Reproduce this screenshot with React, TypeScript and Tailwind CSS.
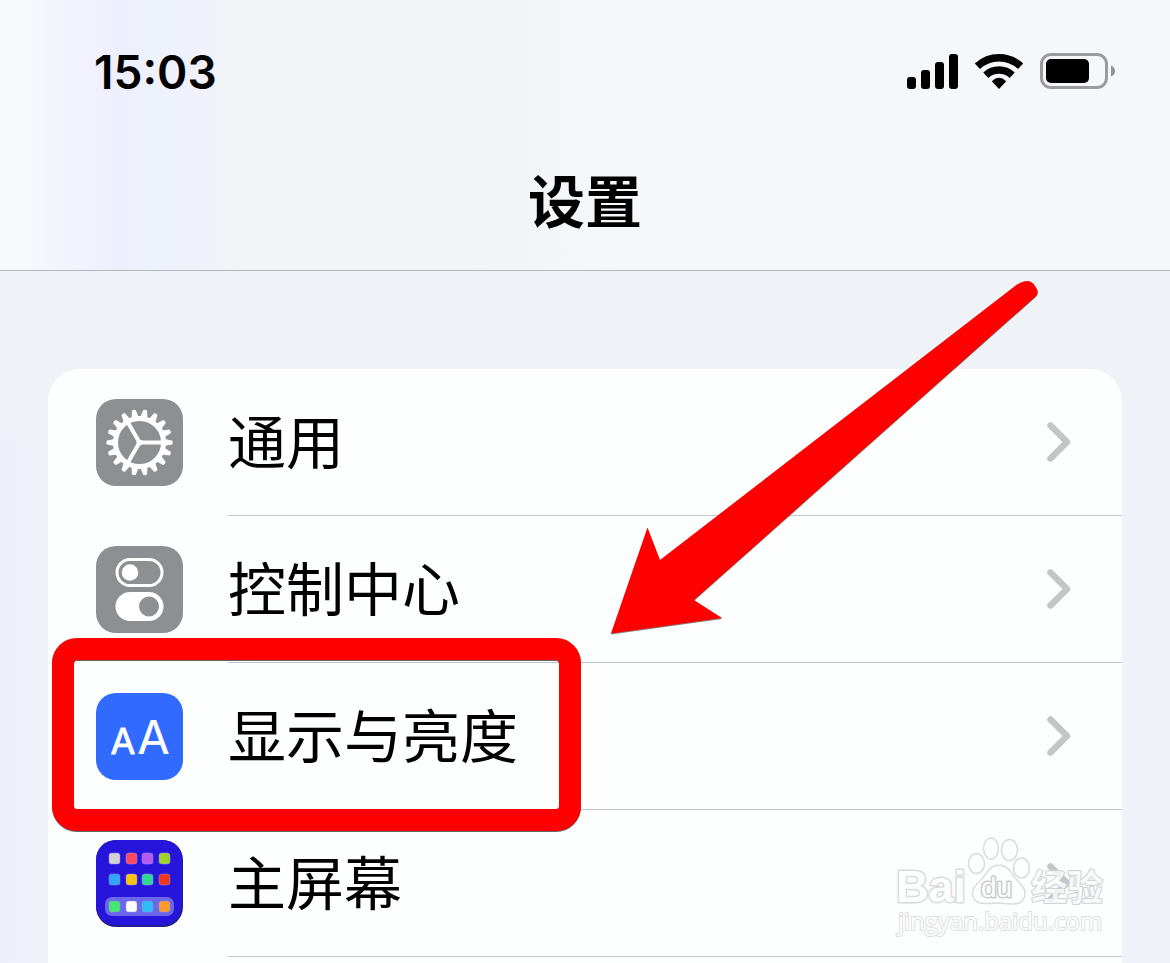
import React from "react";

function App() {
  return (
    <div className="min-h-screen flex flex-col bg-[linear-gradient(180deg,#eff2f6_340px,#eff2f600_460px),linear-gradient(90deg,#efeffa_0px,#eff1f8_60px,#eff2f6_240px)] text-black font-['Inter','Noto_Sans_CJK_SC',sans-serif]">
      <Header />
      <SettingsList />
    </div>
  );
}

export default App;

function Header() {
  return (
    <header className="border-b border-[#b4b6b9] bg-[linear-gradient(90deg,#f5f9fb_0px,#f5f9fb_30px,#f4f4fd_60px,#efeefc_120px,#edf2fc_150px,#f0f1fa_200px,#f0f4f6_240px,#f0f4f5_450px,#f5f8f9_620px,#f5f8f9_100%)]">
      <div className="h-36 flex items-center justify-between pl-[94px] pr-[55px]">
        <span className="text-[46px] font-semibold">15:03</span>
        <div className="flex items-center gap-[17px] pb-0.5">
          <SignalIcon />
          <WifiIcon />
          <BatteryIcon />
        </div>
      </div>
      <h1 className="h-[126px] pt-4 text-center text-[57px] leading-[86px] font-bold">
        设置
      </h1>
    </header>
  );
}

const settings = [
  { title: "通用", href: "#general", icon: <GearIcon />, highlighted: false },
  {
    title: "控制中心",
    href: "#control-center",
    icon: <ControlCenterIcon />,
    highlighted: false,
  },
  {
    title: "显示与亮度",
    href: "#display",
    icon: <DisplayIcon />,
    highlighted: true,
  },
  {
    title: "主屏幕",
    href: "#home-screen",
    icon: <HomeScreenIcon />,
    highlighted: false,
  },
];

function SettingsList() {
  return (
    <main className="relative flex-1 mt-[98px] mx-12 rounded-t-[32px] bg-[#fdfefe]">
      <ul>
        {settings.map((element) => (
          <li key={element.title} className="relative">
            <a href={element.href} className="flex items-center pl-12">
              {element.icon}
              <div className="ml-[45px] flex-1 h-[147px] flex items-center justify-between border-b border-[#c4c6c8] pr-12">
                <span className="pt-0.5 text-[58px] leading-[84px]">
                  {element.title}
                </span>
                <ChevronIcon />
              </div>
            </a>
            {element.highlighted && (
              <div className="absolute z-10 left-1 -top-[25px] w-[529px] h-[193px] rounded-[25px] border-[22px] border-[#ff0000] drop-shadow-[0_1px_0_#00000099] pointer-events-none"></div>
            )}
          </li>
        ))}
      </ul>
      <Arrow />
      <Watermark />
    </main>
  );
}

function SignalIcon() {
  return (
    <svg width="51" height="36" viewBox="0 0 51 36">
      <rect x="0" y="24" width="9" height="12" rx="3" />
      <rect x="14" y="17" width="9" height="19" rx="3" />
      <rect x="28" y="9" width="9" height="27" rx="3" />
      <rect x="42" y="1" width="9" height="35" rx="3" />
    </svg>
  );
}

function WifiIcon() {
  return (
    <svg width="48" height="36" viewBox="0 0 48 36">
      <g fill="none" stroke="#000" strokeWidth="7.5">
        <path d="M2.4 13.2A31.5 31.5 0 0 1 45.6 13.2" />
        <path d="M10.8 22.2A19.5 19.5 0 0 1 37.2 22.2" />
      </g>
      <path d="M24 36L16.8 28.2Q24 21.5 31.2 28.2Z" />
    </svg>
  );
}

function BatteryIcon() {
  return (
    <svg width="75" height="36" viewBox="0 0 75 36">
      <rect
        x="1.5"
        y="1.5"
        width="65"
        height="33"
        rx="9.5"
        fill="none"
        stroke="#999b9c"
        strokeWidth="3"
      />
      <rect x="6" y="6" width="43" height="24" rx="5" />
      <path d="M71 12.5Q75 14 75 18T71 23.5Z" fill="#8f9192" />
    </svg>
  );
}

function ChevronIcon() {
  return (
    <svg width="30" height="42" viewBox="0 0 30 42">
      <path
        d="M6.5 4.5L23 21L6.5 37.5"
        fill="none"
        stroke="#c3c5c7"
        strokeWidth="6.5"
        strokeLinecap="round"
        strokeLinejoin="round"
      />
    </svg>
  );
}

const gearTeeth = Array.from({ length: 18 }, (_, i) => i * 20);

function GearIcon() {
  return (
    <svg width="87" height="87" viewBox="0 0 87 87">
      <rect width="87" height="87" rx="20" fill="#8e8f93" />
      <g transform="translate(43.5 43.5)">
        {gearTeeth.map((angle) => (
          <path
            key={angle}
            d="M25 -3.6L32.5 -2Q34 0 32.5 2L25 3.6Z"
            fill="#fff"
            transform={`rotate(${angle})`}
          />
        ))}
        <circle r="24" fill="none" stroke="#fff" strokeWidth="5" />
        <path
          d="M0 0H22M0 0L-11 -19M0 0L-11 19"
          stroke="#fff"
          strokeWidth="4"
        />
        <circle r="3" fill="#fff" />
      </g>
    </svg>
  );
}

function ControlCenterIcon() {
  return (
    <svg width="87" height="87" viewBox="0 0 87 87">
      <rect width="87" height="87" rx="20" fill="#8e8f93" />
      <rect
        x="21"
        y="13.5"
        width="45"
        height="26"
        rx="13"
        fill="none"
        stroke="#fff"
        strokeWidth="3"
      />
      <circle cx="34" cy="26.5" r="8.3" fill="#fff" />
      <rect x="19.5" y="46" width="48" height="29" rx="14.5" fill="#fff" />
      <circle cx="53" cy="60.5" r="10" fill="#8e8f93" />
    </svg>
  );
}

function DisplayIcon() {
  return (
    <svg width="87" height="87" viewBox="0 0 87 87">
      <rect width="87" height="87" rx="20" fill="#306afe" />
      <g fill="#fff" textAnchor="middle" strokeLinejoin="round" stroke="#fff">
        <text x="27" y="61" fontSize="36" strokeWidth="0.8">
          A
        </text>
        <text x="57.5" y="61" fontSize="47" strokeWidth="0.2">
          A
        </text>
      </g>
    </svg>
  );
}

const homeApps = [
  { x: 13, y: 14, color: "#d3d3d6" },
  { x: 30, y: 14, color: "#fb4a60" },
  { x: 46, y: 14, color: "#b35cf5" },
  { x: 63, y: 14, color: "#9fd32c" },
  { x: 13, y: 35, color: "#33a5f8" },
  { x: 30, y: 35, color: "#fdc40d" },
  { x: 46, y: 35, color: "#2fd696" },
  { x: 63, y: 35, color: "#f0381b" },
  { x: 13, y: 62, color: "#45e86c" },
  { x: 30, y: 62, color: "#ffffff" },
  { x: 46, y: 62, color: "#2fbdf6" },
  { x: 63, y: 62, color: "#fb9a2b" },
];

function HomeScreenIcon() {
  return (
    <svg width="87" height="87" viewBox="0 0 87 87">
      <rect width="87" height="87" rx="20" fill="#20208c" />
      <rect width="86" height="85" rx="20" fill="#2815dc" />
      <rect x="9" y="57" width="69" height="19" rx="7" fill="#6a67ea" />
      {homeApps.map((app) => (
        <rect
          key={`${app.x}-${app.y}`}
          x={app.x}
          y={app.y - 1}
          width="11"
          height="11"
          rx="2.5"
          fill={app.color}
          stroke="#8f8cf0"
          strokeOpacity="0.5"
        />
      ))}
    </svg>
  );
}

function Arrow() {
  return (
    <svg
      className="absolute z-10 left-[563px] -top-[89px] drop-shadow-[0_1px_0_#00000080] pointer-events-none"
      width="427"
      height="354"
      viewBox="0 0 427 354"
    >
      <path
        d="M0 353.5L36.5 247.5L49 280L406 4.5Q412 1 416 1Q421 1 424 6Q429 12 425 16L83 320L111 338Z"
        fill="#ff0000"
      />
    </svg>
  );
}

function Watermark() {
  return (
    <svg
      className="absolute right-3 top-[464px] pointer-events-none"
      width="216"
      height="108"
      viewBox="0 0 216 108"
    >
      <g
        fill="#fdfefe"
        stroke="#d9dbdc"
        strokeWidth="1.5"
        strokeLinejoin="round"
      >
        <ellipse cx="82.5" cy="30.5" rx="8" ry="10" />
        <ellipse cx="97" cy="15.5" rx="7.5" ry="10.5" />
        <ellipse cx="115.5" cy="17" rx="8" ry="10.5" />
        <ellipse cx="127.5" cy="35" rx="8" ry="10" />
        <path d="M105 32C95 32 93 41 87 47C80 53 77 59 79 64C82 72 92 71 104 70C116 71 127 73 130 65C133 58 129 53 123 47C117 41 115 32 105 32Z" />
      </g>
      <g
        fill="#fdfefe"
        strokeLinejoin="round"
        strokeWidth="3"
        paintOrder="stroke"
        className="font-['Liberation_Sans','Noto_Sans_CJK_SC',sans-serif]"
      >
        <text x="2" y="69" fontSize="45" fontWeight="700" stroke="#d9dbdc">
          Bai
        </text>
        <text x="87" y="64" fontSize="28" stroke="#c9cbcd">
          du
        </text>
        <text
          x="137"
          y="68"
          fontSize="36"
          fontWeight="700"
          fillOpacity="0.8"
          stroke="#d2d4d5"
          strokeWidth="2"
        >
          经验
        </text>
      </g>
      <text
        x="4"
        y="97"
        fontSize="24"
        fill="#fdfefe"
        stroke="#dddfe0"
        strokeWidth="2"
        paintOrder="stroke"
        className="font-['Open_Sans',sans-serif]"
      >
        jingyan.baidu.com
      </text>
    </svg>
  );
}
